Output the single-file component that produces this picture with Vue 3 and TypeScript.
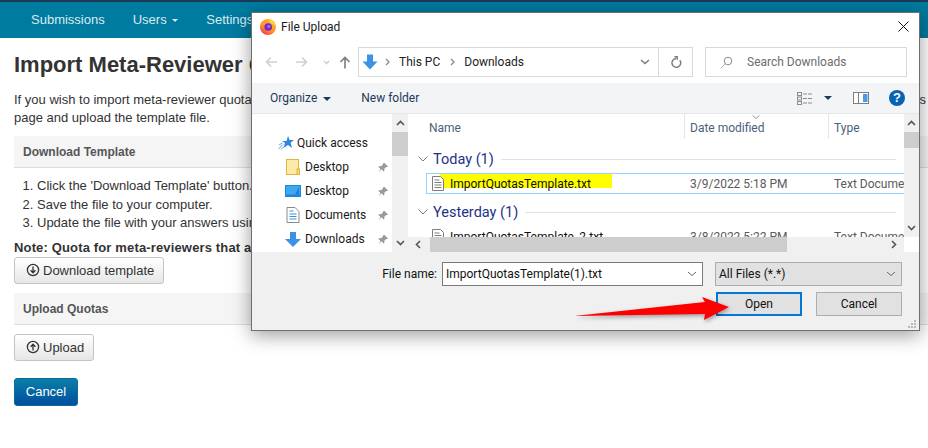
<template>
  <div class="page">
    <nav class="topnav">
      <a class="nav-link">Submissions</a>
      <a class="nav-link">Users <span class="caret"></span></a>
      <a class="nav-link">Settings <span class="caret"></span></a>
    </nav>
    <main class="content">
      <h1>Import Meta-Reviewer Quotas</h1>
      <p class="intro">If you wish to import meta-reviewer quotas from a file, download the template and fill it in with your answers then save the file and then come back again to this<br />page and upload the template file.</p>
      <div class="panel-head">Download Template</div>
      <ol class="steps">
        <li>Click the 'Download Template' button.</li>
        <li>Save the file to your computer.</li>
        <li>Update the file with your answers using a text editor.</li>
      </ol>
      <p class="note">Note: Quota for meta-reviewers that are not in the file will not change.</p>
      <button class="btn">
        <svg class="circle-icon" viewBox="0 0 14 14"><circle cx="7" cy="7" r="5.6" /><path d="M7 3.6v6M4.6 7.2 7 9.8l2.4-2.6" /></svg>
        Download template
      </button>
      <div class="panel-head second">Upload Quotas</div>
      <button class="btn upload">
        <svg class="circle-icon" viewBox="0 0 14 14"><circle cx="7" cy="7" r="5.6" /><path d="M7 10.4v-6M4.6 6.8 7 4.2l2.4 2.6" /></svg>
        Upload
      </button>
      <button class="btn-primary">Cancel</button>
    </main>

    <section class="dialog">
      <header class="titlebar">
        <svg class="fx" width="16" height="17" viewBox="0 0 16 17">
          <defs>
            <linearGradient id="fxg" x1="0.8" y1="0.1" x2="0.2" y2="1">
              <stop offset="0" stop-color="#ffb52e" />
              <stop offset="0.6" stop-color="#ff8a2a" />
              <stop offset="1" stop-color="#f2295f" />
            </linearGradient>
          </defs>
          <circle cx="8" cy="9" r="8" fill="url(#fxg)" />
          <path d="M10.500 0c-.2 1.800 1 2.800 2.600 4 1.400 1.100 2.400 2.500 2.700 4.500-1-1.500-2.300-2.600-4-3.100-1.400-.4-2.300-1.300-2.300-2.600 0-1.100.4-2.100 1-2.800z" fill="#ffd93d" />
          <path d="M1 5c1.500-1.800 3.500-2.800 6-2.700-1 .7-1.500 1.500-1.600 2.200L2 8z" fill="#ff9a2e" />
          <circle cx="8.200" cy="9" r="3.800" fill="#6f2bc2" />
          <circle cx="8.800" cy="8.500" r="1.800" fill="#a55ee6" />
        </svg>
        <span class="title">File Upload</span>
        <svg class="close" width="11" height="11" viewBox="0 0 11 11"><path d="M.5.500l10 10M10.500.500l-10 10" /></svg>
      </header>

      <div class="navbar">
        <div class="nav-arrows">
          <svg width="13" height="12" viewBox="0 0 13 12" class="arrow off"><path d="M12 6H1.500M6 1.500 1.500 6 6 10.500" /></svg>
          <svg width="13" height="12" viewBox="0 0 13 12" class="arrow off"><path d="M1 6h10.500M7 1.500 11.500 6 7 10.500" /></svg>
          <svg width="7" height="5" viewBox="0 0 7 5" class="arrow off small"><path d="M1 1l2.500 2.500L6 1" /></svg>
          <svg width="12" height="13" viewBox="0 0 12 13" class="arrow up"><path d="M6 12.500V1.500M1.500 6 6 1.500 10.500 6" /></svg>
        </div>
        <div class="address">
          <svg width="16" height="16" viewBox="0 0 16 16"><path d="M5 .5h6v7h4.500L8 15.500.5 7.500H5z" fill="#3c92e4" /></svg>
          <svg class="crumb" width="5" height="8" viewBox="0 0 5 8"><path d="M1 1l3 3-3 3" /></svg>
          <span>This PC</span>
          <svg class="crumb" width="5" height="8" viewBox="0 0 5 8"><path d="M1 1l3 3-3 3" /></svg>
          <span>Downloads</span>
          <span class="grow"></span>
          <svg class="addr-chev" width="10" height="6" viewBox="0 0 10 6"><path d="M1 1l4 3.500L9 1" /></svg>
          <span class="addr-refresh">
            <svg width="12" height="13" viewBox="0 0 12 13"><path d="M9.800 4.200a4.400 4.400 0 1 1-3.800-1.700M4.500.800h2.700v3" /></svg>
          </span>
        </div>
        <div class="search">
          <svg width="13" height="13" viewBox="0 0 13 13"><circle cx="8" cy="5" r="3.800" stroke="#8a8a8a" /><path d="M5.200 7.800.8 12.200" stroke="#c9a890" /></svg>
          <span>Search Downloads</span>
        </div>
      </div>

      <div class="toolbar">
        <span class="tool">Organize <i class="tri"></i></span>
        <span class="tool new">New folder</span>
        <span class="grow"></span>
        <svg class="views" width="16" height="13" viewBox="0 0 16 13">
          <rect x="0.500" y="0.500" width="4" height="3" /><rect x="0.500" y="5" width="4" height="3" /><rect x="0.500" y="9.500" width="4" height="3" />
          <path d="M6 2h4M11 2h4M6 6.500h4M11 6.500h4M6 11h4M11 11h4" />
        </svg>
        <i class="tri dark"></i>
        <svg class="preview" width="16" height="12" viewBox="0 0 16 12">
          <rect x="0.500" y="0.500" width="15" height="11" fill="#fff" stroke="#7d7d7d" />
          <rect x="10" y="2" width="4.500" height="8" fill="#4a9be8" />
          <path d="M5.500 1v10" stroke="#7d7d7d" />
        </svg>
        <span class="help">?</span>
      </div>

      <div class="body">
        <aside class="tree">
          <div v-for="item in treeItems" :key="item.label + item.icon" class="tree-row" :class="{ quick: item.icon === 'star' }">
            <svg v-if="item.icon === 'star'" width="16" height="14" viewBox="0 0 16 14"><path d="M10 0l1.600 4H16l-3.400 2.800L14 12l-4-3-4.500 3L7 7 4 5h4.500z" fill="#2f86dc" /><path d="M.5 13 5 8.500M1 9l3.500-2M3 13.500l3-3" stroke="#5aa5e8" fill="none" /></svg>
            <svg v-else-if="item.icon === 'folder'" width="14" height="16" viewBox="0 0 14 16"><rect x="0.500" y="0.500" width="12" height="15" fill="#ffe9a6" stroke="#e2b53e" /><rect x="11" y="10" width="2.500" height="5.500" fill="#ffd968" stroke="#e2b53e" /></svg>
            <svg v-else-if="item.icon === 'screen'" width="16" height="12" viewBox="0 0 16 12"><rect width="16" height="12" fill="#1b87dc" /><rect x="1" y="1" width="14" height="8.500" fill="#3fa6f2" /><path d="M10 9.500 14 2v7.500z" fill="#1e7fd0" /></svg>
            <svg v-else-if="item.icon === 'doc'" width="13" height="16" viewBox="0 0 13 16"><path d="M.5.500h8l4 4v11H.5z" fill="#fff" stroke="#8a8a8a" /><path d="M3 4h4M3 7h7M3 9.500h7M3 12h7" stroke="#3b8fd8" /></svg>
            <svg v-else width="16" height="15" viewBox="0 0 16 15"><path d="M5 0h6v7h5l-8 8-8-8h5z" fill="#3c92e4" /></svg>
            <span class="tree-label">{{ item.label }}</span>
            <svg v-if="item.pin" class="pin" width="11" height="11" viewBox="0 0 11 11"><path d="M6.500.500l4 4-1 .7-1-.2-2 2 .2 2-.8.800-2.200-2.400L.500 10.500l2-3.500L.5 4.800l.8-.8 2 .2 2-2-.2-1z" fill="#9a9a9a" /></svg>
          </div>
        </aside>
        <div class="vscroll tree-scroll">
          <svg width="9" height="6" viewBox="0 0 9 6"><path d="M1 5l3.500-3.500L8 5" /></svg>
          <i class="thumb tree-thumb"></i>
          <span class="grow"></span>
          <svg width="9" height="6" viewBox="0 0 9 6"><path d="M1 1l3.500 3.500L8 1" /></svg>
        </div>

        <div class="list">
          <div class="list-view">
            <div class="columns">
              <span class="col name">Name</span>
              <span class="col date">Date modified<svg class="sort" width="8" height="4" viewBox="0 0 8 4"><path d="M.5.500 4 3.500 7.500.500" /></svg></span>
              <span class="col type">Type</span>
            </div>
            <template v-for="group in fileGroups" :key="group.title">
              <div class="group">
                <svg width="10" height="6" viewBox="0 0 10 6"><path d="M.5.500 5 5 9.500.500" /></svg>
                <span>{{ group.title }}</span>
                <i class="rule"></i>
              </div>
              <div class="file" :class="{ selected: group.selected }">
                <i v-if="group.selected" class="marker"></i>
                <svg width="12" height="15" viewBox="0 0 12 15"><path d="M.5.500h8l3 3v11H.5z" fill="#fff" stroke="#7d7d7d" /><path d="M2.500 4h5M2.500 6.500h7M2.500 9h7M2.500 11.500h7" stroke="#7d7d7d" /></svg>
                <span class="file-name">{{ group.file }}</span>
                <span class="file-date">{{ group.date }}</span>
                <span class="file-type">Text Document</span>
              </div>
            </template>
          </div>
          <div class="vscroll list-scroll">
            <svg width="9" height="6" viewBox="0 0 9 6"><path d="M1 5l3.500-3.500L8 5" /></svg>
            <i class="thumb list-thumb"></i>
            <span class="grow"></span>
            <svg width="9" height="6" viewBox="0 0 9 6"><path d="M1 1l3.500 3.500L8 1" /></svg>
          </div>
          <div class="hscroll">
            <svg width="6" height="9" viewBox="0 0 6 9"><path d="M5 1 1.500 4.500 5 8" /></svg>
            <i class="hthumb"></i>
            <span class="grow"></span>
            <svg width="6" height="9" viewBox="0 0 6 9"><path d="M1 1l3.500 3.500L1 8" /></svg>
          </div>
          <div class="corner"></div>
        </div>
      </div>

      <footer class="footer">
        <div class="footer-row">
          <label class="fname-label">File name:</label>
          <div class="fname">
            <span>ImportQuotasTemplate(1).txt</span>
            <svg width="10" height="6" viewBox="0 0 10 6"><path d="M1 1l4 3.500L9 1" /></svg>
          </div>
          <div class="filter">
            <span>All Files (*.*)</span>
            <svg width="10" height="6" viewBox="0 0 10 6"><path d="M1 1l4 3.500L9 1" /></svg>
          </div>
        </div>
        <div class="footer-row actions">
          <button class="win-btn default">Open</button>
          <button class="win-btn">Cancel</button>
        </div>
      </footer>
      <svg class="grip" width="10" height="10" viewBox="0 0 10 10"><path d="M7 1h2v2H7zM4 4h2v2H4zM7 4h2v2H7zM1 7h2v2H1zM4 7h2v2H4zM7 7h2v2H7z" fill="#b8b8b8" /></svg>
    </section>

    <svg class="red-arrow" width="170" height="40" viewBox="570 292 170 40">
      <polygon points="574,316 705,302 702,297 729,307 704,320 705,314" fill="#fd0000" />
    </svg>
  </div>
</template>

<script setup lang="ts">
interface TreeItem {
  label: string
  icon: 'star' | 'folder' | 'screen' | 'doc' | 'down'
  pin: boolean
}

const treeItems: TreeItem[] = [
  { label: 'Quick access', icon: 'star', pin: false },
  { label: 'Desktop', icon: 'folder', pin: true },
  { label: 'Desktop', icon: 'screen', pin: true },
  { label: 'Documents', icon: 'doc', pin: true },
  { label: 'Downloads', icon: 'down', pin: true }
]

const fileGroups = [
  { title: 'Today (1)', file: 'ImportQuotasTemplate.txt', date: '3/9/2022 5:18 PM', selected: true },
  { title: 'Yesterday (1)', file: 'ImportQuotasTemplate_2.txt', date: '3/8/2022 5:22 PM', selected: false }
]
</script>

<style>
html, body {
  margin: 0;
  background: #fff;
}
</style>

<style scoped>
.page {
  position: relative;
  width: 928px;
  height: 448px;
  overflow: hidden;
  background: #fff;
  color: #333;
  font-family: "Liberation Sans", Arial, sans-serif;
  font-size: 13px;
}

.grow { flex: 1; }

/* site nav */
.topnav {
  display: flex;
  align-items: center;
  gap: 28px;
  height: 34px;
  padding: 0 0 2px 31px;
  background: #007ba0;
  border-top: 2px solid #1b3a54;
  color: #dbe9ef;
}
.nav-link { white-space: nowrap; }
.caret {
  display: inline-block;
  margin-left: 2px;
  vertical-align: middle;
  border-top: 3px solid #dbe9ef;
  border-left: 3px solid transparent;
  border-right: 3px solid transparent;
}

.content {
  width: 1100px;
  padding-left: 14px;
}
h1 {
  margin: 15px 0 0;
  font-size: 22px;
  line-height: 24px;
  font-weight: bold;
  color: #333;
  white-space: nowrap;
}
.intro {
  margin: 14px 0 0;
  line-height: 18px;
  white-space: nowrap;
}
.panel-head {
  margin-top: 9px;
  height: 31px;
  padding-left: 9px;
  line-height: 33px;
  font-size: 12px;
  font-weight: bold;
  color: #555;
  background: #f5f5f5;
  border-bottom: 1px solid #ddd;
}
.panel-head.second { margin-top: 9px; }
.steps {
  margin: 9px 0 0;
  padding-left: 23px;
  line-height: 18.500px;
}
.note {
  margin: 6px 0 0;
  font-weight: bold;
  line-height: 18px;
  letter-spacing: 0.15px;
  white-space: nowrap;
}
.btn {
  display: flex;
  align-items: center;
  gap: 3px;
  height: 27px;
  padding: 0 9px 0 11px;
  font: 13px "Liberation Sans", Arial, sans-serif;
  color: #333;
  background: linear-gradient(#fff, #e6e6e6);
  border: 1px solid #c4c4c4;
  border-radius: 3px;
}
.btn.upload { margin-top: 9px; }
.circle-icon {
  width: 14px;
  height: 14px;
  fill: none;
  stroke: #333;
  stroke-width: 1.300;
}
.btn-primary {
  display: block;
  margin-top: 17px;
  width: 64px;
  height: 28px;
  padding: 0;
  font: 13px "Liberation Sans", Arial, sans-serif;
  color: #fff;
  background: linear-gradient(#0a7fa8, #004f9e);
  border: 1px solid #0a6a9a;
  border-radius: 3px;
}

/* windows file dialog */
.dialog {
  position: absolute;
  left: 251px;
  top: 12px;
  width: 667px;
  height: 317px;
  display: flex;
  flex-direction: column;
  background: #fff;
  border: 1px solid #6f6f6f;
  box-shadow: 0 4px 18px rgba(0, 0, 0, 0.4);
  font-family: Roboto, "Noto Sans", sans-serif;
  font-size: 12px;
  color: #1a1a1a;
}
.titlebar {
  display: flex;
  align-items: center;
  height: 27px;
  padding: 0 10px 2px 8px;
}
.title { margin-left: 5px; flex: 1; }
.close { fill: none; stroke: #111; stroke-width: 1; }

.navbar {
  display: flex;
  height: 41px;
  padding: 5px 11px 0 0;
  box-sizing: border-box;
}
.nav-arrows {
  display: flex;
  align-items: center;
  width: 106px;
  height: 30px;
  padding-left: 13px;
  box-sizing: border-box;
}
.arrow { fill: none; stroke-width: 1.600; }
.arrow.off { stroke: #cfcfcf; margin-right: 17px; }
.arrow.small { margin-right: 9px; margin-left: -2px; }
.arrow.up { stroke: #7d7d7d; }
.address {
  display: flex;
  align-items: center;
  width: 335px;
  height: 30px;
  box-sizing: border-box;
  border: 1px solid #d9d9d9;
  padding-left: 3px;
  color: #222;
}
.crumb { fill: none; stroke: #8a8a8a; stroke-width: 1.300; margin: 0 9px 0 7px; }
.address .crumb + span + .crumb { margin-left: 10px; }
.addr-chev { fill: none; stroke: #7d7d7d; stroke-width: 1.600; margin-right: 8px; }
.addr-refresh {
  display: flex;
  align-items: center;
  justify-content: center;
  width: 33px;
  height: 100%;
  border-left: 1px solid #d9d9d9;
}
.addr-refresh svg { fill: none; stroke: #7d7d7d; stroke-width: 1.500; }
.search {
  display: flex;
  align-items: center;
  gap: 14px;
  width: 202px;
  height: 30px;
  margin-left: 12px;
  padding-left: 14px;
  box-sizing: border-box;
  border: 1px solid #d9d9d9;
  color: #6d6d6d;
}
.search svg { fill: none; stroke-width: 1; }

.toolbar {
  display: flex;
  align-items: center;
  height: 30px;
  padding: 0 14px 0 18px;
  background: #f3f4f6;
  border-bottom: 1px solid #e6e7e9;
  color: #1e395b;
}
.tool.new { margin-left: 30px; }
.tri {
  display: inline-block;
  margin-left: 3px;
  vertical-align: middle;
  border-top: 4px solid #1e395b;
  border-left: 4px solid transparent;
  border-right: 4px solid transparent;
}
.tri.dark { margin: 0 21px 0 9px; }
.views { fill: none; stroke: #8c8c8c; stroke-width: 1; margin-right: 2px; }
.preview { margin-right: 20px; }
.help {
  width: 16px;
  height: 16px;
  border-radius: 50%;
  background: #0a62b4;
  color: #fff;
  text-align: center;
  font: bold 13px/16px "Liberation Sans", sans-serif;
}

.body {
  display: flex;
  height: 138px;
}
.tree {
  width: 140px;
  padding-top: 17px;
  box-sizing: border-box;
  flex: none;
}
.tree-row {
  display: flex;
  align-items: center;
  height: 24px;
  padding-left: 33px;
  box-sizing: border-box;
}
.tree-row svg:first-child { width: 16px; flex: none; }
.tree-row.quick { padding-left: 26px; }
.tree-label { margin-left: 4px; width: 76px; white-space: nowrap; }
.quick .tree-label { margin-left: 3px; }
.pin { margin-left: auto; margin-right: 4px; }

.vscroll {
  flex: none;
  display: flex;
  flex-direction: column;
  align-items: center;
  width: 15px;
  background: #f0f0f0;
}
.vscroll svg { fill: none; stroke: #555; stroke-width: 1.600; margin: 6px 0; flex: none; }
.thumb { display: block; width: 15px; background: #cdcdcd; flex: none; }
.tree-scroll { width: 16px; }
.tree-thumb { width: 16px; height: 24px; margin-top: 0; }
.list-thumb { height: 16px; }

.list {
  flex: 1;
  display: grid;
  grid-template-columns: 1fr 15px;
  grid-template-rows: 123px 15px;
  min-width: 0;
}
.list-view { overflow: hidden; min-width: 0; }
.columns {
  display: flex;
  height: 25px;
  align-items: flex-end;
  color: #4c607a;
}
.col {
  position: relative;
  height: 25px;
  line-height: 29px;
  box-sizing: border-box;
  white-space: nowrap;
}
.col.name { width: 276px; padding-left: 21px; }
.col.date { width: 144px; padding-left: 5px; border-left: 1px solid #e5e5e5; }
.col.type { padding-left: 5px; border-left: 1px solid #e5e5e5; }
.sort {
  position: absolute;
  left: 67px;
  top: 1px;
  fill: none;
  stroke: #9a9a9a;
}
.group {
  display: flex;
  align-items: center;
  height: 26px;
  margin-top: 7px;
  padding-left: 10px;
  color: #1e3287;
  font-size: 14.500px;
}
.group + .file + .group { margin-top: 5px; }
.group svg { fill: none; stroke: #7d7d7d; margin-right: 5px; }
.rule { flex: 1; height: 1px; background: #e3e3e3; margin: 0 8px 0 7px; }
.file {
  position: relative;
  display: flex;
  align-items: center;
  height: 21px;
  margin: 1px 0 0 18px;
  padding-left: 6px;
  box-sizing: border-box;
  color: #111;
  white-space: nowrap;
}
.file.selected {
  border: 1px solid #99d1ff;
  border-right: none;
  padding-left: 5px;
}
.marker {
  position: absolute;
  left: 13px;
  top: 0;
  width: 172px;
  height: 14px;
  background: #ffff00;
}
.file svg { position: relative; flex: none; }
.file-name { position: relative; flex: none; width: 240px; margin-left: 6px; }
.file-date { flex: none; width: 144px; color: #5a5a5a; }
.file-type { flex: none; color: #5a5a5a; }
.list-scroll { grid-row: 1; grid-column: 2; }
.hscroll {
  grid-row: 2;
  grid-column: 1;
  display: flex;
  align-items: center;
  background: #f0f0f0;
}
.hscroll svg { fill: none; stroke: #555; stroke-width: 1.600; margin: 0 7px; flex: none; }
.hthumb { display: block; width: 357px; height: 15px; background: #cdcdcd; margin-left: 2px; }
.corner { background: #fff; }

.footer {
  flex: 1;
  display: flex;
  flex-direction: column;
  position: relative;
  background: #f0f0f0;
  padding: 10px 17px 0 0;
  color: #111;
}
.footer-row {
  display: flex;
  align-items: center;
  justify-content: flex-end;
}
.fname-label { margin-right: 5px; }
.fname, .filter {
  display: flex;
  align-items: center;
  justify-content: space-between;
  box-sizing: border-box;
  height: 24px;
  padding: 0 5px 0 3px;
}
.fname {
  width: 261px;
  background: #fff;
  border: 1px solid #7a7a7a;
}
.filter {
  width: 187px;
  margin-left: 12px;
  background: #e1e1e1;
  border: 1px solid #adadad;
}
.fname svg, .filter svg { fill: none; stroke: #666; }
.actions { margin-top: 6px; gap: 14px; }
.win-btn {
  width: 86px;
  height: 24px;
  padding: 0;
  background: #e1e1e1;
  border: 1px solid #adadad;
  font: 12px Roboto, "Noto Sans", sans-serif;
  color: #111;
}
.win-btn.default { border: 2px solid #0078d7; }
.grip { position: absolute; right: 2px; bottom: 1px; }

.red-arrow {
  position: absolute;
  left: 570px;
  top: 292px;
  filter: drop-shadow(1px 2px 2px rgba(0, 0, 0, 0.35));
}
</style>
